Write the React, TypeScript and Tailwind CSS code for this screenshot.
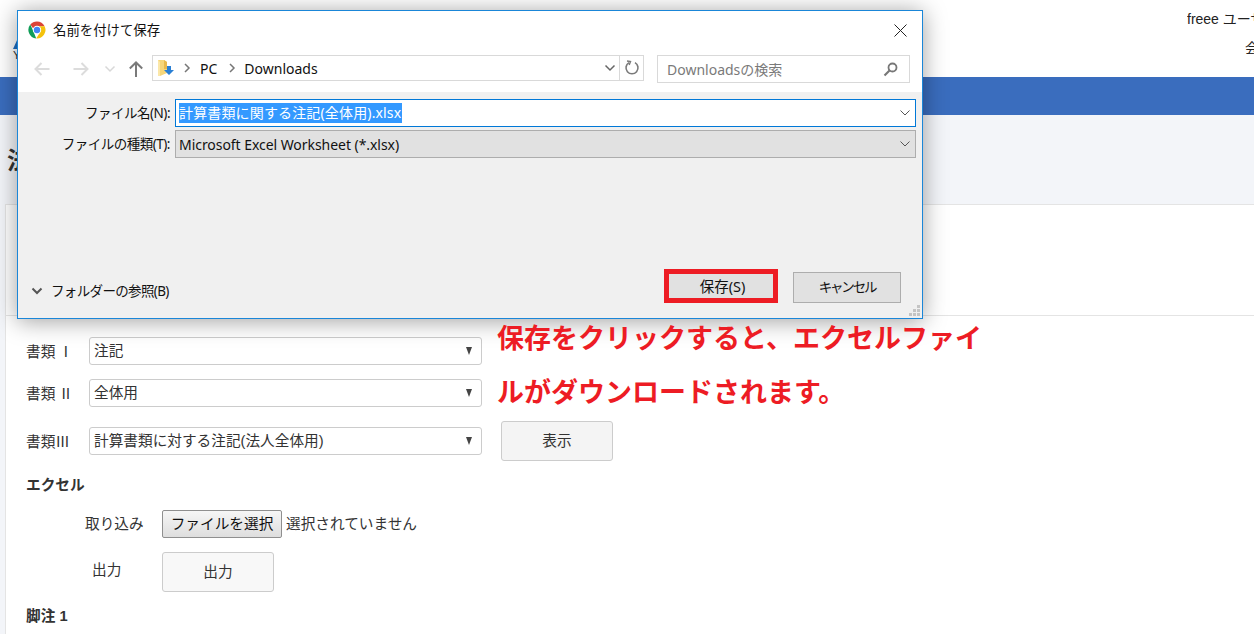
import React from "react";

const uiFont = "[font-family:'Noto_Sans','Noto_Sans_CJK_JP',sans-serif]";

function Chev({ className = "", color = "#555", w = 1 }: { className?: string; color?: string; w?: number }) {
  return (
    <svg className={className} width="12" height="8" viewBox="0 0 12 8" fill="none">
      <path d="M1.5 1.5 L6 6 L10.5 1.5" stroke={color} strokeWidth={w} />
    </svg>
  );
}

function Arrow({ color, flip = false }: { color: string; flip?: boolean }) {
  return (
    <svg width="16" height="14" viewBox="0 0 16 14" fill="none" className={flip ? "rotate-180" : ""}>
      <path d="M15.5 7 H1.5 M7.5 1 L1.5 7 L7.5 13" stroke={color} strokeWidth="2" />
    </svg>
  );
}

function ChromeIcon() {
  return (
    <svg width="18" height="18" viewBox="0 0 18 18" className="shrink-0">
      <path d="M9 0.5 A8.5 8.5 0 0 1 16.6 5.2 L9 5.2 A3.8 3.8 0 0 0 5.4 7.8 L2.3 3.6 A8.5 8.5 0 0 1 9 0.5 Z" fill="#db4437" />
      <path d="M2.3 3.6 L5.6 10.7 L8.2 17.4 A8.5 8.5 0 0 1 2.3 3.6 Z" fill="#0f9d58" />
      <path d="M16.6 5.2 A8.5 8.5 0 0 1 8.2 17.4 L12.2 11 A3.8 3.8 0 0 0 12.2 6.8 L9 5.2 Z" fill="#f4c20d" />
      <circle cx="9" cy="9" r="4.2" fill="#ffffff" />
      <circle cx="9" cy="9" r="3.2" fill="#4285f4" />
    </svg>
  );
}

function FolderIcon() {
  return (
    <svg width="18" height="18" viewBox="0 0 18 18" className="shrink-0">
      <path d="M1 1 H7 L10 3 V14 L3 17 H1 Z" fill="#f6d67a" />
      <path d="M7 1 L10 3 V10 H7 Z" fill="#e8b94c" />
      <path d="M1 1 V17 H3 V3 Z" fill="#fbe7a8" />
      <path d="M10 7 H14 V11 H17 L12 16 L7 11 H10 Z" fill="#2a7fd4" />
    </svg>
  );
}

function PageSelect({ label, value }: { label: string; value: string }) {
  return (
    <div className="flex items-center">
      <div className="w-[63px] shrink-0 [font-family:'Noto_Sans_CJK_JP',sans-serif]">{label}</div>
      <div className="flex h-[28px] w-[393px] items-center justify-between rounded-[3px] border border-[#cccccc] bg-white pl-[4px] pr-[9px] text-[#333333]">
        <span>{value}</span>
        <span className="h-0 w-0 border-x-[3.5px] border-t-[8px] border-x-transparent border-t-[#444444]" />
      </div>
    </div>
  );
}

function Dialog() {
  return (
    <div className={`absolute left-[17px] top-[10px] flex h-[309px] w-[906px] flex-col border border-[#1a86d8] bg-white text-[14px] text-[#111111] shadow-[0_2px_22px_rgba(0,0,0,0.38)] ${uiFont}`}>
      <div className="flex h-[36px] shrink-0 items-center justify-between pl-[10px] pr-[15px] pt-[2px]">
        <div className="flex items-center gap-[7px]">
          <ChromeIcon />
          <span className="text-[13.4px]">名前を付けて保存</span>
        </div>
        <svg width="13" height="13" viewBox="0 0 13 13" fill="none">
          <path d="M0.5 0.5 L12.5 12.5 M12.5 0.5 L0.5 12.5" stroke="#222222" strokeWidth="1" />
        </svg>
      </div>
      <div className="flex h-[45px] shrink-0 items-start pr-[12px] pt-[8px]">
        <div className="flex h-[28px] items-center">
          <div className="ml-[16px]"><Arrow color="#dcdcdc" /></div>
          <div className="ml-[23px]"><Arrow color="#dcdcdc" flip /></div>
          <Chev className="ml-[15px]" color="#d8d8d8" w={1.5} />
          <svg className="ml-[13px]" width="14" height="16" viewBox="0 0 14 16" fill="none">
            <path d="M7 16 V1.5 M0.8 7.5 L7 1.5 L13.2 7.5" stroke="#7a7a7a" strokeWidth="2" />
          </svg>
        </div>
        <div className="ml-[9px] flex h-[26px] w-[492px] items-center border border-[#d9d9d9] pl-[4px]">
          <FolderIcon />
          <svg className="ml-[9px]" width="7" height="10" viewBox="0 0 7 10" fill="none">
            <path d="M1 1 L5 5 L1 9" stroke="#777777" strokeWidth="1.5" />
          </svg>
          <span className="ml-[9px]">PC</span>
          <svg className="ml-[12px]" width="7" height="10" viewBox="0 0 7 10" fill="none">
            <path d="M1 1 L5 5 L1 9" stroke="#777777" strokeWidth="1.5" />
          </svg>
          <span className="ml-[8px]">Downloads</span>
          <Chev className="ml-auto mr-[3px]" color="#666666" w={1.5} />
          <div className="flex h-full w-[24px] items-center justify-center border-l border-[#d9d9d9]">
            <svg width="16" height="16" viewBox="0 0 16 16" fill="none">
              <path d="M5 2.6 A6 6 0 1 0 11 2.6" stroke="#7a7a7a" strokeWidth="1.6" />
              <path d="M3 1 L6.5 1.5 L5.2 5" stroke="#7a7a7a" strokeWidth="1.4" />
            </svg>
          </div>
        </div>
        <div className="ml-[13px] flex h-[28px] w-[253px] items-center justify-between border border-[#d9d9d9] pl-[9px] pr-[11px] text-[#7a7a7a]">
          <span>Downloadsの検索</span>
          <svg width="15" height="15" viewBox="0 0 15 15" fill="none">
            <circle cx="9.5" cy="5.5" r="4" stroke="#777777" strokeWidth="1.8" />
            <path d="M6.5 8.5 L1.5 13.5" stroke="#777777" strokeWidth="2.2" />
          </svg>
        </div>
      </div>
      <div className="flex flex-1 flex-col bg-[#f0f0f0] pr-[6px] pt-[7px]">
        <div className="flex items-center">
          <div className="w-[152px] text-right text-[13.5px] tracking-[-0.5px]">ファイル名(N):</div>
          <div className="ml-[5px] flex h-[28px] flex-1 items-center justify-between border border-[#0078d7] bg-white pl-[3px] pr-[4px]">
            <span className="bg-[#3399ff] pr-[1px] text-[14px] leading-[20px] tracking-[0.15px] text-white">計算書類に関する注記(全体用).xlsx</span>
            <Chev color="#555555" />
          </div>
        </div>
        <div className="mt-[3px] flex items-center">
          <div className="w-[152px] text-right text-[13.5px] tracking-[-0.5px]">ファイルの種類(T):</div>
          <div className="ml-[5px] flex h-[28px] flex-1 items-center justify-between border border-[#adadad] bg-[#e1e1e1] pl-[3px] pr-[4px]">
            <span className="tracking-[-0.05px]">Microsoft Excel Worksheet (*.xlsx)</span>
            <Chev color="#555555" />
          </div>
        </div>
        <div className="mt-auto flex items-end justify-between pb-[15px]">
          <div className="mb-[2px] flex items-center pl-[13px]">
            <Chev color="#555555" w={2} />
            <span className="ml-[8px] text-[13.5px] tracking-[-0.65px]">フォルダーの参照(B)</span>
          </div>
          <div className="flex items-center gap-[17px] pr-[15px]">
            <div className="relative flex h-[31px] w-[108px] items-center justify-center border-l border-[#0078d7] bg-[#e1e1e1] pb-[2px] text-[14.5px]">
              保存(S)
              <div className="absolute -left-[5px] -top-[3px] h-[34px] w-[114px] border-[5px] border-[#ed1c24]" />
            </div>
            <div className="flex h-[31px] w-[108px] items-center justify-center border border-[#adadad] bg-[#e1e1e1] pb-[1px] text-[13.5px] tracking-[-2.2px]">
              キャンセル
            </div>
          </div>
        </div>
      </div>
      <div className="absolute bottom-[2px] right-[2px] grid grid-cols-3 gap-[1px]">
        {[0, 0, 1, 0, 1, 1, 1, 1, 1].map((on, i) => (
          <span key={i} className={`h-[3px] w-[3px] ${on ? "bg-[#c4c4c4]" : ""}`} />
        ))}
      </div>
    </div>
  );
}

export default function App() {
  return (
    <div className="relative h-[634px] w-[1254px] overflow-hidden bg-[#f3f5f9] text-[14.67px] text-[#333333] [font-family:'Liberation_Sans','Noto_Sans_CJK_JP',sans-serif]">
      <header className="flex h-[77px] justify-between bg-white">
        <div className="pl-[13px] pt-[38px]">
          <div className="h-0 w-0 border-x-[5px] border-b-[11px] border-x-transparent border-b-[#1f6fc4]" />
          <div className="text-[11px] leading-[12px] text-[#333333]">Y</div>
        </div>
        <div className="w-[67px] overflow-hidden whitespace-nowrap pt-[9px] text-[14px] text-[#222222]">
          <div className="leading-[20px]">freee ユーザー</div>
          <div className="mt-[9px] pl-[58px] leading-[20px]">会社</div>
        </div>
      </header>
      <div className="h-[38px] bg-[#3a6dbe]" />
      <div className="h-[89px] pl-[7px] pt-[29px]">
        <div className="text-[24px] font-bold leading-[34px]">法人</div>
      </div>
      <main className="ml-[5px] h-[430px] border-l border-t border-[#e4e4e4] bg-white">
        <div className="h-[111px] border-b border-[#e4e4e4]" />
        <div className="pl-[20px] pt-[21px]">
          <PageSelect label="書類 Ⅰ" value="注記" />
          <div className="mt-[14px]">
            <PageSelect label="書類 Ⅱ" value="全体用" />
          </div>
          <div className="mt-[14px] flex items-center">
            <PageSelect label="書類Ⅲ" value="計算書類に対する注記(法人全体用)" />
            <div className="ml-[19px] flex h-[40px] w-[112px] items-center justify-center rounded-[3px] border border-[#cccccc] bg-[#f4f4f4]">
              表示
            </div>
          </div>
          <div className="mt-[14px] font-bold leading-[20px]">エクセル</div>
          <div className="mt-[15px] flex h-[28px] items-center">
            <div className="ml-[59px] w-[77px]">取り込み</div>
            <div className="flex h-[28px] w-[120px] items-center justify-center rounded-[2px] border border-[#8f8f8f] bg-gradient-to-b from-[#f6f6f6] to-[#dedede] text-[#111111]">
              ファイルを選択
            </div>
            <div className="ml-[4px]">選択されていません</div>
          </div>
          <div className="mt-[14px] flex h-[40px] items-center">
            <div className="ml-[66px] w-[70px] pb-[4px]">出力</div>
            <div className="flex h-[40px] w-[112px] items-center justify-center rounded-[3px] border border-[#cccccc] bg-[#f8f8f8]">
              出力
            </div>
          </div>
          <div className="mt-[14px] font-bold leading-[20px]">脚注 1</div>
        </div>
      </main>
      <Dialog />
      <div className="absolute left-[497px] top-[312px] w-[490px] text-[27px] font-bold leading-[54px] text-[#ed1c24]">
        保存をクリックすると、エクセルファイルがダウンロードされます。
      </div>
    </div>
  );
}
